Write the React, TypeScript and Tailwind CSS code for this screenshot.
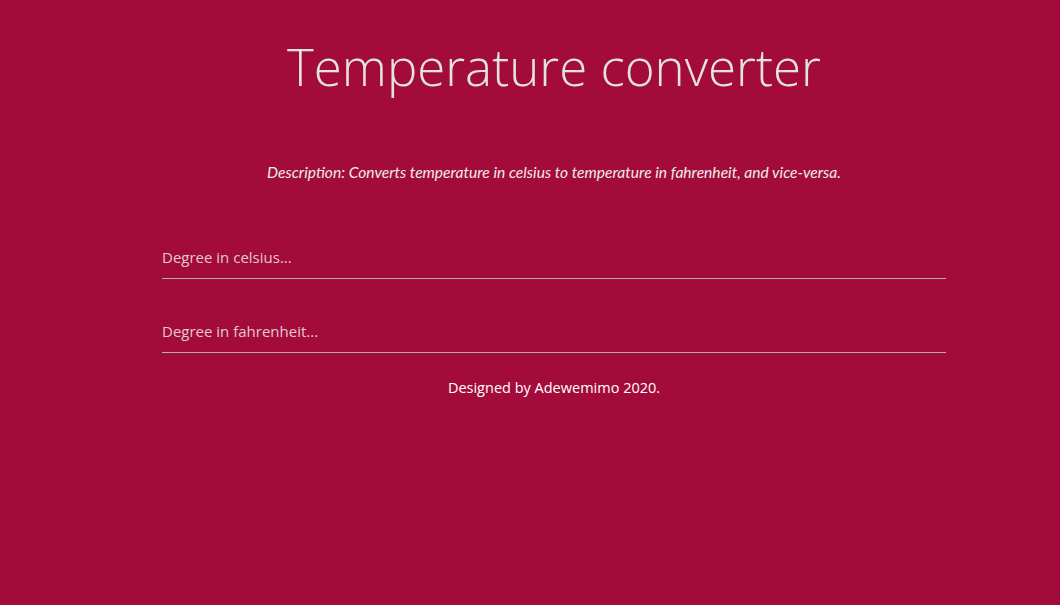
export default function App() {
  return (
    <div className="min-h-[605px] w-full bg-[#a30b3a] text-[#e0e0e0]" style={{ fontFamily: '"Open Sans", "Noto Sans", sans-serif' }}>
      <div className="ml-[162px] flex w-[784px] flex-col">
        <h1 className="pt-[31px] text-center text-[51px] font-[350] leading-[70px] text-[#e3e3e3]">Temperature converter</h1>
        <p className="mt-[61px] text-center text-[15.6px] italic leading-[20px] text-[#ececec]" style={{ fontFamily: 'Lato, "Open Sans", sans-serif' }}>
          Description: Converts temperature in celsius to temperature in fahrenheit, and vice-versa.
        </p>
        <div className="mt-[64px] border-b border-[#b0b0b0] pb-[10px] text-[15px] leading-[22px] text-[#e3c9d0]">Degree in celsius...</div>
        <div className="mt-[41px] border-b border-[#b0b0b0] pb-[10px] text-[15px] leading-[22px] text-[#e3c9d0]">Degree in fahrenheit...</div>
        <p className="mt-[25px] text-center text-[14.5px] leading-[20px] text-white">Designed by Adewemimo 2020.</p>
      </div>
    </div>
  );
}
